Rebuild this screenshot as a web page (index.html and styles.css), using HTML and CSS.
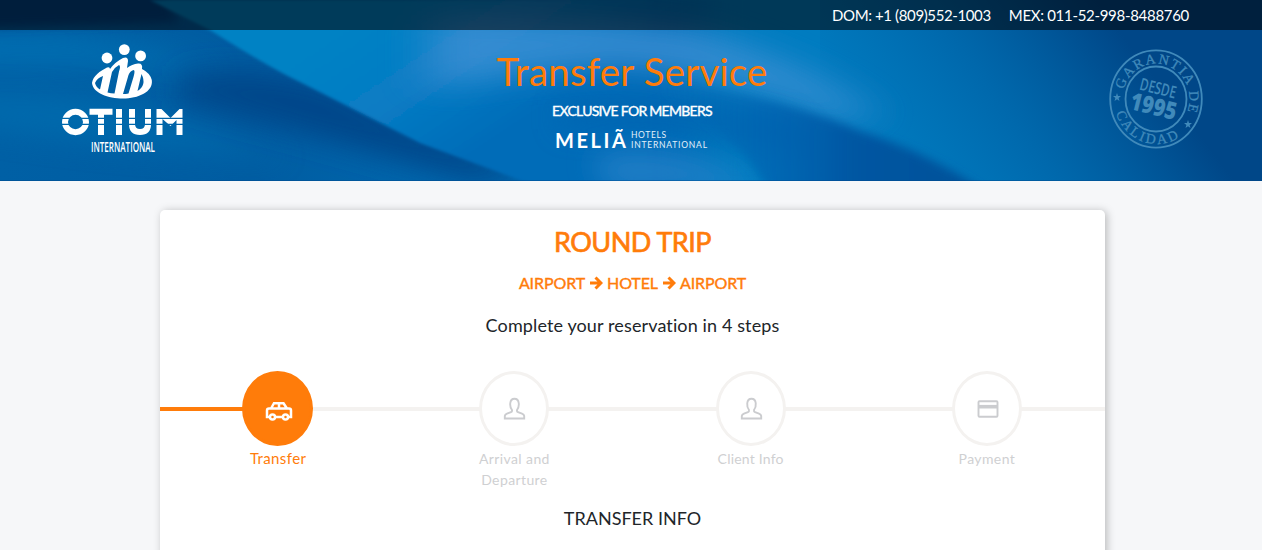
FILE: index.html
```html
<!DOCTYPE html>
<html lang="en">
<head>
<meta charset="utf-8">
<title>Transfer Service</title>
<link rel="stylesheet" href="styles.css">
</head>
<body>
<header class="hero">
  <svg class="hero-bg" viewBox="0 0 1262 181" preserveAspectRatio="none" aria-hidden="true">
    <defs>
      <linearGradient id="base" x1="0" x2="1262" y1="0" y2="0" gradientUnits="userSpaceOnUse">
        <stop offset="0" stop-color="#0060a5"/><stop offset=".2" stop-color="#005ca1"/><stop offset=".5" stop-color="#0073bb"/><stop offset=".68" stop-color="#007cc0"/><stop offset="1" stop-color="#007cc0"/>
      </linearGradient>
      <linearGradient id="right" x1="860" x2="1080" y1="150" y2="-20" gradientUnits="userSpaceOnUse">
        <stop offset="0" stop-color="#0069ae" stop-opacity="0"/><stop offset=".5" stop-color="#0062a6" stop-opacity=".75"/><stop offset=".85" stop-color="#005294"/><stop offset="1" stop-color="#004788"/>
      </linearGradient>
      <linearGradient id="sweep" x1="330" x2="430" y1="30" y2="181" gradientUnits="userSpaceOnUse">
        <stop offset="0" stop-color="#0082c4"/><stop offset=".5" stop-color="#087cc4"/><stop offset="1" stop-color="#006cb8"/>
      </linearGradient>
      <linearGradient id="dark" x1="660" x2="985" y1="0" y2="0" gradientUnits="userSpaceOnUse">
        <stop offset="0" stop-color="#0063b0" stop-opacity="0"/><stop offset=".35" stop-color="#005fae" stop-opacity=".7"/><stop offset=".6" stop-color="#0056a2"/><stop offset="1" stop-color="#005098"/>
      </linearGradient>
      <filter id="b4" x="-30%" y="-50%" width="160%" height="200%"><feGaussianBlur stdDeviation="5"/></filter>
      <filter id="b1" x="-30%" y="-30%" width="160%" height="160%"><feGaussianBlur stdDeviation="1.5"/></filter>
      <filter id="b14" x="-50%" y="-100%" width="200%" height="300%"><feGaussianBlur stdDeviation="14"/></filter>
      <filter id="b25" x="-50%" y="-150%" width="200%" height="400%"><feGaussianBlur stdDeviation="24 14"/></filter>
    </defs>
    <rect width="1262" height="181" fill="url(#base)"/>
    <path d="M-30 38Q120 30 225 72Q120 62-30 62Z" fill="#0076b8" opacity=".8" filter="url(#b14)"/>
    <path d="M-30 95Q90 90 180 120L290 160L180 150Q90 145-30 125Z" fill="#0071b2" opacity=".6" filter="url(#b14)"/>
    <path d="M-20-20H150L180 22L-20 28Z" fill="#004284" filter="url(#b4)"/>
    <path d="M180 76Q260 62 330 85L540 181H470Q330 140 180 100Z" fill="#00468a" filter="url(#b14)"/>
    <path d="M150 0L210 30Q270 68 300 82L420 143L525 182H1000V0Z" fill="url(#sweep)" filter="url(#b1)"/>
    <rect x="700" y="-60" width="700" height="300" fill="#007cc0" filter="url(#b25)"/>
    <rect x="820" width="442" height="181" fill="url(#right)"/>
    <path d="M430 15Q560 15 700 30Q830 72 870 114L850 125Q740 78 620 66Q520 72 430 90Z" fill="#3c90d4" opacity=".8" filter="url(#b25)"/>
    <path d="M560 105Q650 80 790 120L820 150L730 145Q650 130 560 130Z" fill="#0063b0" opacity=".65" filter="url(#b14)"/>
    <path d="M590 158Q680 138 760 190H610Z" fill="#2a84cb" opacity=".75" filter="url(#b14)"/>
    <path d="M640 78Q780 96 860 131Q930 153 990 195H770Q740 130 640 84Z" fill="url(#dark)" filter="url(#b4)"/>
    <path d="M0 180.500H1262" stroke="#00478c" opacity=".4"/>
  </svg>
  <div class="topbar"><span class="dom">DOM: +1 (809)552-1003</span><span class="mex">MEX: 011-52-998-8488760</span></div>
  <div class="banner">
    <svg class="logo" viewBox="0 0 124 114" role="img" aria-label="Otium International">
      <defs>
        <mask id="stripes"><rect width="124" height="112" fill="#fff"/><path d="M0 76.300H124M0 82.300H124" stroke="#000" stroke-width="1.200"/></mask>
      </defs>
      <g fill="#fff">
        <circle cx="46" cy="16" r="5.400"/><circle cx="63.300" cy="7.600" r="5.400"/><circle cx="79.600" cy="13.900" r="5.400"/>
        <path fill-rule="evenodd" d="M31 41C32 34 39 29 46 25.500Q49 24.500 49 27Q54 20 62 16Q67 14 67 19L66 26Q71 22 77 21.500Q82 21 81 27Q89 31 90.800 38C92.500 50 77 56.500 62 56.500C47 56.500 32 51 31 41ZM34 41Q35 45 39 47.500L42 34Q36 36 34 41ZM51 30L46.500 50.500Q50 51.500 53.500 51.500L58 29.500Q60 24 58 23Q54 25 51 30ZM67.500 33L62 52Q65 52 67.500 51.500L72.500 35Q74.500 28 72.500 28Q69 29 67.500 33ZM80.500 32L76.500 49Q86 43 80.500 32Z"/>
        <g mask="url(#stripes)" fill="none" stroke="#fff">
          <ellipse cx="14.500" cy="80" rx="10.500" ry="10.200" stroke-width="6"/>
          <path d="M28.500 69.700H51.500M40 67V93M58 67V93" stroke-width="6"/>
          <path d="M71 67V82Q71 90 79 90Q87 90 87 82V67" stroke-width="6"/>
          <path fill="#fff" stroke="none" d="M95.500 93V67H100.500L109.500 76L118.500 67H121.500V93H115.500V78L109.500 84L101.500 77V93Z"/>
        </g>
      </g>
      <text x="30" y="109.500" textLength="64" lengthAdjust="spacingAndGlyphs" class="logo-sub">INTERNATIONAL</text>
    </svg>
    <div class="title">
      <h1>Transfer Service</h1>
      <p>EXCLUSIVE FOR MEMBERS</p>
      <svg class="melia" viewBox="0 0 154 26" role="img" aria-label="Meliã Hotels International">
        <text x="0" y="23" textLength="71" class="melia-name">MELIÃ</text>
        <text x="76" y="13" textLength="35" class="melia-sub">HOTELS</text>
        <text x="76" y="22.500" textLength="76" class="melia-sub">INTERNATIONAL</text>
      </svg>
    </div>
    <svg class="seal" viewBox="0 0 94 100" preserveAspectRatio="none" role="img" aria-label="Garantía de calidad desde 1995">
      <defs>
        <path id="arcTop" d="M14.700 40.500A33.500 35.500 0 1 1 70 75.800"/>
        <path id="arcBottom" d="M6.800 63A43 45.500 0 0 0 76 84"/>
      </defs>
      <g fill="none" stroke="#408abb"><ellipse cx="47" cy="50" rx="45.800" ry="48.600" stroke-width="1.800"/><ellipse cx="47" cy="50" rx="30.500" ry="32.500" stroke-width="1.800"/></g>
      <g class="seal-text">
        <text class="seal-ring"><textPath href="#arcTop" textLength="111">GARANTIA DE</textPath></text>
        <text class="seal-ring"><textPath href="#arcBottom" startOffset="1" textLength="78">CALIDAD</textPath></text>
        <g transform="rotate(14 47 50)">
          <text x="28" y="45" textLength="37" lengthAdjust="spacingAndGlyphs" class="seal-desde">DESDE</text>
          <text x="23" y="66" textLength="47" lengthAdjust="spacingAndGlyphs" class="seal-year">1995</text>
        </g>
        <path id="star" d="M8 44L9 47L12 47L9.600 49L10.500 52L8 50.200L5.500 52L6.400 49L4 47L7 47Z"/>
        <use href="#star" x="71" y="27"/>
      </g>
    </svg>
  </div>
</header>
<main class="card">
  <h2>ROUND TRIP</h2>
  <p class="route"><span>AIRPORT</span><svg viewBox="0 0 14 14"><path d="M1 7H12M6.500 1.500L12 7L6.500 12.500"/></svg><span>HOTEL</span><svg viewBox="0 0 14 14"><path d="M1 7H12M6.500 1.500L12 7L6.500 12.500"/></svg><span>AIRPORT</span></p>
  <p class="lead">Complete your reservation in 4 steps</p>
  <ol class="steps">
    <li class="step active"><div class="dot"><svg viewBox="0 0 28 28"><g fill="none" stroke="#fff" stroke-width="2.500"><path d="M5 20H2V13.500Q2 11.500 4 11.500H24Q26 11.500 26 13.500V20H23M10 20H18M6 11.500L9 6.200H18.500L22 11.500M14 6V11.500"/><circle cx="7.500" cy="20" r="2.500"/><circle cx="20.500" cy="20" r="2.500"/></g></svg></div><span>Transfer</span></li>
    <li class="step"><div class="dot"><svg viewBox="0 0 28 28"><path d="M4.800 23.500V21Q5 19.500 7 18.700L11 17.200Q12.300 16.700 12 15C9.500 12 9 3.800 14.500 3.800S19.500 12 17 15Q16.700 16.700 18 17.200L22 18.700Q24 19.500 24.200 21V23.500Z" fill="none" stroke="#cbcccf" stroke-width="1.900"/></svg></div><span>Arrival and<br>Departure</span></li>
    <li class="step"><div class="dot"><svg viewBox="0 0 28 28"><path d="M4.800 23.500V21Q5 19.500 7 18.700L11 17.200Q12.300 16.700 12 15C9.500 12 9 3.800 14.500 3.800S19.500 12 17 15Q16.700 16.700 18 17.200L22 18.700Q24 19.500 24.200 21V23.500Z" fill="none" stroke="#cbcccf" stroke-width="1.900"/></svg></div><span class="client">Client Info</span></li>
    <li class="step"><div class="dot"><svg viewBox="0 0 28 28"><rect x="5.500" y="6.300" width="19" height="15.500" rx="1" fill="none" stroke="#cbcccf" stroke-width="1.900"/><path d="M5.500 11.700H24.500" stroke="#cbcccf" stroke-width="3.600"/></svg></div><span>Payment</span></li>
  </ol>
  <h3>TRANSFER INFO</h3>
</main>
</body>
</html>
```
FILE: styles.css
```css
* { box-sizing: border-box; }
html { overflow: hidden; }
body { margin: 0; background: #f6f7f9; color: #212529; font-family: Lato, "Open Sans", sans-serif; }
h1, h2, h3, p, ol { margin: 0; padding: 0; }
svg { display: block; }
.hero { position: relative; height: 181px; overflow: hidden; color: #fff; }
.hero-bg { position: absolute; inset: 0; width: 100%; height: 181px; }
.topbar { position: relative; height: 30px; padding: 0 73px 0 0; display: flex; justify-content: flex-end; gap: 18px; background: rgba(0, 0, 0, .54); font-size: 15px; line-height: 30px; white-space: nowrap; }
.dom { letter-spacing: -.38px; }
.mex { letter-spacing: -.3px; }
.banner { position: relative; height: 151px; display: grid; grid-template-columns: 1fr 300px 1fr; align-items: start; padding: 12px 59px 0 61px; }
.logo { width: 124px; height: 114px; overflow: visible; }
.logo-sub { font: 600 14px "Open Sans", sans-serif; fill: #fff; }
.title { display: flex; flex-direction: column; align-items: center; text-align: center; white-space: nowrap; }
.title h1 { margin-top: 5px; font-size: 38.500px; line-height: 48px; font-weight: 400; letter-spacing: .18px; color: #ff7c0a; }
.title p { margin-top: 6px; font-size: 14px; line-height: 20px; letter-spacing: -.72px; -webkit-text-stroke: .4px #fff; }
.melia { width: 154px; height: 26px; margin-top: 4px; overflow: visible; }
.melia-name { font: 700 20px Lato, sans-serif; fill: #fff; }
.melia-sub { font: 400 8.500px Lato, sans-serif; fill: #e2f0fa; }
.seal { width: 94px; height: 100px; margin-top: 7px; justify-self: end; overflow: visible; }
.seal-text { fill: #408abb; }
.seal-ring { font: 400 14px "Liberation Serif", serif; stroke: #408abb; stroke-width: .3px; }
.seal-desde { font: 600 17px "Open Sans", sans-serif; }
.seal-year { font: 800 24px "Open Sans", sans-serif; }
.card { width: 945px; height: 360px; margin: 29px 0 0 160px; background: #fff; border-radius: 5px; box-shadow: 2px 1px 8px rgba(0, 0, 0, .25); text-align: center; white-space: nowrap; }
h2 { padding-top: 16px; font-size: 27px; line-height: 32px; font-weight: 400; letter-spacing: -.5px; color: #ff7c0a; -webkit-text-stroke: .7px #ff7c0a; }
.route { display: flex; justify-content: center; align-items: center; gap: 4px; margin-top: 15px; font-size: 16px; line-height: 20px; letter-spacing: -.1px; color: #ff7c0a; -webkit-text-stroke: .4px #ff7c0a; }
.route svg { width: 14px; height: 14px; fill: none; stroke: #ff7c0a; stroke-width: 3; }
.lead { margin-top: 21px; font-size: 18px; line-height: 22px; letter-spacing: .12px; }
.steps { list-style: none; display: grid; grid-template-columns: repeat(4, 1fr); margin-top: 35px; height: 122px; background: linear-gradient(#f4f2f0, #f4f2f0) 0 36px / 100% 4px no-repeat; }
.step { display: flex; flex-direction: column; align-items: center; font-size: 14px; line-height: 21px; letter-spacing: .4px; color: #cfd0d2; }
.dot { width: 70px; height: 75px; display: flex; justify-content: center; align-items: center; border: 3px solid #f4f2f0; border-radius: 50%; background: #fff; }
.dot svg { width: 28px; height: 28px; }
.step span { margin-top: 2px; }
.active { color: #ff7c0a; font-size: 15px; background: linear-gradient(#ff7c0a, #ff7c0a) 0 36px / 50% 4px no-repeat; }
.active .dot { width: 71px; margin-right: 1px; padding: 5px 0 0 3px; background: #ff7c0a; border-color: #ff7c0a; }
.client { letter-spacing: .2px; }
h3 { margin-top: 14px; font-size: 18px; line-height: 22px; font-weight: 400; }
```
